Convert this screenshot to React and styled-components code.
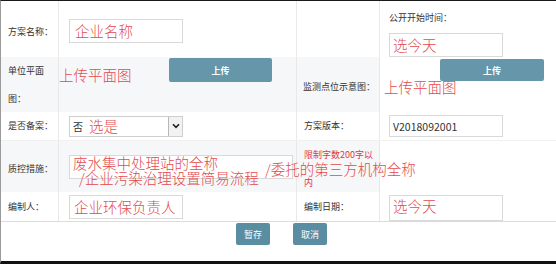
import React from 'react';
import styled, { createGlobalStyle } from 'styled-components';

const GlobalStyle = createGlobalStyle`
  html, body {
    margin: 0;
    padding: 0;
    background: #fff;
  }
  * {
    box-sizing: border-box;
  }
`;

const Frame = styled.div`
  width: 556px;
  height: 264px;
  background: #fff;
  border-top: 1px solid #1a1a1a;
  border-bottom: 3px solid #111;
  border-left: 1px solid #9a9a9a;
  font-family: "Noto Sans CJK SC", "Noto Sans", sans-serif;
  color: #333;
  overflow: hidden;
`;

const Row = styled.div`
  display: grid;
  grid-template-columns: 58px 238px 83px 1fr;
  height: ${(p) => p.$h}px;
  border-bottom: 1px solid ${(p) => (p.$last ? '#dcdcdc' : '#f0f0f0')};
`;

const Label = styled.div`
  display: flex;
  align-items: center;
  padding: ${(p) => p.$pt || 0}px ${(p) => (p.$wide ? 0 : 5)}px 0 ${(p) => (p.$wide ? 6 : 7)}px;
  font-size: 9px;
  line-height: 28px;
  white-space: ${(p) => (p.$wide ? 'nowrap' : 'normal')};
  color: ${(p) => (p.$red ? '#e0383c' : '#333')};
  background: ${(p) => (p.$shade ? '#f6f7f9' : '#fff')};
  border-right: 1px solid #e9e9e9;
`;

const Cell = styled.div`
  position: relative;
  display: flex;
  flex-direction: ${(p) => (p.$col ? 'column' : 'row')};
  align-items: ${(p) => p.$align || 'flex-start'};
  justify-content: ${(p) => p.$justify || 'flex-start'};
  padding: ${(p) => p.$pad || '0 0 0 10px'};
  background: ${(p) => (p.$shade ? '#f6f7f9' : '#fff')};
  border-right: ${(p) => (p.$edge ? '1px solid #e9e9e9' : 'none')};
`;

const SmallText = styled.div`
  font-size: 9px;
  line-height: 16px;
  color: #333;
`;

const Box = styled.div`
  display: flex;
  align-items: center;
  width: ${(p) => p.$w || 114}px;
  height: ${(p) => p.$h || 24}px;
  margin-top: ${(p) => p.$mt || 0}px;
  padding-left: 3px;
  background: #fff;
  border: 1px solid #d9d9d9;
  font-size: 10.5px;
  color: #333;
  white-space: nowrap;
  overflow: visible;
`;

const Note = styled.span`
  font-size: 14.5px;
  line-height: 18px;
  font-weight: 300;
  color: #e34a4e;
  white-space: nowrap;
  margin-top: ${(p) => p.$mt || 0}px;
  margin-left: ${(p) => p.$ml || 0}px;
`;

const FloatNote = styled(Note)`
  position: absolute;
  left: ${(p) => p.$x}px;
  top: ${(p) => p.$y}px;
  z-index: 2;
`;

const Upload = styled.button`
  width: ${(p) => p.$w}px;
  height: ${(p) => p.$h}px;
  margin-left: ${(p) => p.$ml || 0}px;
  border: none;
  border-radius: 2px;
  background: #6596aa;
  color: #fff;
  font-family: inherit;
  font-size: 9px;
  font-weight: bold;
  padding: 0;
  flex-shrink: 0;
`;

const Select = styled.div`
  display: flex;
  align-items: center;
  width: 114px;
  height: 21px;
  background: #fff;
  border: 1px solid #cfcfcf;
`;

const SelectValue = styled.div`
  flex: 1;
  display: flex;
  align-items: center;
  padding-left: 3px;
  font-size: 10px;
  white-space: nowrap;
`;

const Caret = styled.div`
  width: 14px;
  height: 100%;
  display: flex;
  align-items: center;
  justify-content: center;
  background: #f2f2f2;
  border-left: 1px solid #b8b8b8;
`;

const Footer = styled.div`
  display: flex;
  justify-content: center;
  gap: 23px;
  padding: 1px 0 0 6px;
`;

const ActionButton = styled.button`
  width: 34px;
  height: 22px;
  border: none;
  border-radius: 2px;
  background: #5a8ca2;
  color: #fff;
  font-family: inherit;
  font-size: 9px;
  padding: 0;
`;

const App = () => (
  <>
    <GlobalStyle />
    <Frame>
      <Row $h={56}>
        <Label $pt={6}>方案名称：</Label>
        <Cell $edge $pad="18px 0 0 10px">
          <Box>
            <Note $ml={2}>企业名称</Note>
          </Box>
        </Cell>
        <Label />
        <Cell $col $pad="9px 0 0 9px">
          <SmallText>公开开始时间：</SmallText>
          <Box $mt={7}>
            <Note>选今天</Note>
          </Box>
        </Cell>
      </Row>

      <Row $h={55}>
        <Label $shade>单位平面图：</Label>
        <Cell $shade $edge $justify="space-between" $pad="1px 24px 0 0">
          <Note $mt={8}>上传平面图</Note>
          <Upload $w={103} $h={24}>上传</Upload>
        </Cell>
        <Label $shade $wide $pt={3}>监测点位示意图：</Label>
        <Cell $col $pad="2px 0 0 0">
          <Upload $w={104} $h={22} $ml={60}>上传</Upload>
          <Note $ml={4} $mt={-3}>上传平面图</Note>
        </Cell>
      </Row>

      <Row $h={29}>
        <Label>是否备案：</Label>
        <Cell $edge $align="center">
          <Select>
            <SelectValue>
              否<Note $ml={6}>选是</Note>
            </SelectValue>
            <Caret>
              <svg width="8" height="6" viewBox="0 0 8 6">
                <path d="M1 1.2 L4 4.4 L7 1.2" fill="none" stroke="#222" strokeWidth="1.6" />
              </svg>
            </Caret>
          </Select>
        </Cell>
        <Label>方案版本：</Label>
        <Cell $align="center" $pad="0 0 0 9px">
          <Box $h={22}>V2018092001</Box>
        </Cell>
      </Row>

      <Row $h={51}>
        <Label $shade>质控措施：</Label>
        <Cell $shade $edge $pad="14px 0 0 10px">
          <Box $w={224} />
          <FloatNote $x={14} $y={13}>废水集中处理站的全称</FloatNote>
          <FloatNote $x={20} $y={28}>/企业污染治理设置简易流程</FloatNote>
          <FloatNote $x={206} $y={19}>/委托的第三方机构全称</FloatNote>
        </Cell>
        <Label $shade $red>限制字数200字以内</Label>
        <Cell />
      </Row>

      <Row $h={30} $last>
        <Label>编制人：</Label>
        <Cell $edge $pad="3px 0 0 10px">
          <Box>
            <Note $ml={1}>企业环保负责人</Note>
          </Box>
        </Cell>
        <Label>编制日期：</Label>
        <Cell $pad="3px 0 0 9px">
          <Box $h={26}>
            <Note $mt={-4}>选今天</Note>
          </Box>
        </Cell>
      </Row>

      <Footer>
        <ActionButton>暂存</ActionButton>
        <ActionButton>取消</ActionButton>
      </Footer>
    </Frame>
  </>
);

export default App;
